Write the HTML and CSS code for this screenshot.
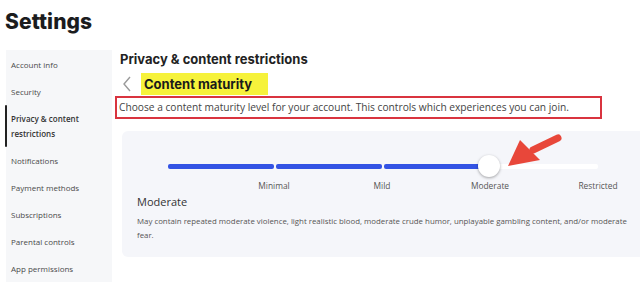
FILE: index.html
```html
<!DOCTYPE html>
<html>
<head>
<meta charset="utf-8">
<link rel="stylesheet" href="styles.css">
</head>
<body>
<div class="page">
  <h1 class="title">Settings</h1>
  <div class="layout">
    <nav class="sidebar">
      <div class="nav-item">Account info</div>
      <div class="nav-item">Security</div>
      <div class="nav-item active">Privacy &amp; content<br>restrictions</div>
      <div class="nav-item">Notifications</div>
      <div class="nav-item">Payment methods</div>
      <div class="nav-item">Subscriptions</div>
      <div class="nav-item">Parental controls</div>
      <div class="nav-item">App permissions</div>
    </nav>
    <main class="main">
      <h2 class="section-title">Privacy &amp; content restrictions</h2>
      <div class="subhead">
        <svg class="back" width="10" height="16" viewBox="0 0 10 16"><path d="M8 1 L2 8 L8 15" fill="none" stroke="#9a9a9a" stroke-width="1.4"/></svg>
        <span class="highlight">Content maturity</span>
      </div>
      <div class="desc-box">Choose a content maturity level for your account. This controls which experiences you can join.</div>
      <div class="card">
        <div class="slider">
          <div class="track">
            <div class="seg"></div>
            <div class="seg"></div>
            <div class="seg"></div>
            <div class="seg rest"></div>
          </div>
          <div class="thumb"></div>
          <div class="labels">
            <span class="lbl">Minimal</span>
            <span class="lbl">Mild</span>
            <span class="lbl">Moderate</span>
            <span class="lbl">Restricted</span>
          </div>
        </div>
        <div class="level">Moderate</div>
        <p class="level-desc">May contain repeated moderate violence, light realistic blood, moderate crude humor, unplayable gambling content, and/or moderate fear.</p>
      </div>
      <svg class="arrow" width="70" height="40" viewBox="0 0 70 40"><path d="M61 6 L36 18" stroke="#e8473a" stroke-width="7" stroke-linecap="round" fill="none"/><polygon points="11,34 23,8 43,28" fill="#e8473a"/></svg>
    </main>
  </div>
</div>
</body>
</html>
```
FILE: styles.css
```css
* { box-sizing: border-box; }
body { margin: 0; background: #fff; font-family: "Open Sans", "Liberation Sans", sans-serif; color: #222; }
.page { width: 640px; height: 303px; overflow: hidden; position: relative; }
.title { margin: 0; padding: 8px 0 0 5px; font-size: 21px; font-weight: 800; line-height: 28px; color: #1b1c1e; letter-spacing: 0.1px; font-family: "Inter", "Open Sans", sans-serif; }
.layout { display: flex; margin-top: 14px; }
.sidebar { width: 106px; flex: none; margin-left: 6px; background: #f6f7f9; padding: 1px 0 6px; height: 232px; }
.nav-item { font-size: 8px; color: #4a4a4a; padding: 0 0 0 5px; height: 27px; display: flex; align-items: center; line-height: 15px; position: relative; }
.nav-item.active { height: 42px; font-weight: 600; color: #333; }
.nav-item.active::before { content: ""; position: absolute; left: -1px; top: 0; bottom: 0; width: 2px; background: #222; border-radius: 1px; }
.main { flex: 1; padding-left: 3px; position: relative; }
.section-title { margin: 0; padding: 0 0 0 5px; font-size: 13px; font-weight: 700; line-height: 18px; color: #222; font-family: "Inter", "Open Sans", sans-serif; }
.subhead { display: flex; align-items: center; height: 22px; margin-top: 5px; padding-left: 7px; }
.back { margin-right: 9px; }
.highlight { background: #f6f23b; font-size: 13px; font-weight: 700; color: #1a1a1a; padding: 0 16px 0 3px; height: 22px; line-height: 22px; font-family: "Inter", "Open Sans", sans-serif; }
.desc-box { width: 487px; height: 23px; margin-top: 1px; border: 2px solid #d9343f; font-size: 10.2px; color: #444; line-height: 19px; padding-left: 2px; white-space: nowrap; overflow: hidden; }
.card { margin: 12px 0 0 7px; width: 540px; height: 126px; background: #f5f6fa; border-radius: 6px; padding: 0 15px; }
.slider { position: relative; height: 62px; }
.track { position: absolute; left: 31px; top: 33px; width: 430px; height: 5px; display: flex; gap: 2px; }
.seg { flex: 1; background: #3353e4; border-radius: 2px; }
.seg.rest { background: #fff; }
.thumb { position: absolute; left: 341px; top: 24px; width: 22px; height: 22px; border-radius: 50%; background: #fff; box-shadow: 0 1px 3px rgba(0,0,0,0.35); }
.labels { position: absolute; left: 31px; top: 49px; width: 430px; display: grid; grid-template-columns: repeat(4, 1fr); column-gap: 2px; font-size: 8.4px; color: #555; }
.lbl { justify-self: end; transform: translateX(50%); white-space: nowrap; }
.level { font-size: 11px; color: #333; line-height: 14px; margin-top: 2px; }
.level-desc { margin: 5px 0 0; width: 496px; font-size: 7.85px; color: #555; line-height: 14px; }
.arrow { position: absolute; left: 385px; top: 82px; }
```
